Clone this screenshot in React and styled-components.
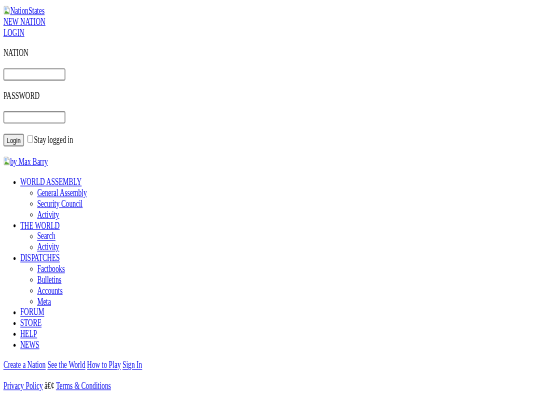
import React from "react";
import styled, { createGlobalStyle } from "styled-components";

const Global = createGlobalStyle`
  html, body { margin: 0; padding: 0; background: #fff; overflow: hidden; height: 405px; }
`;

const Page = styled.div`
  width: 1280px;
  height: 670px;
  overflow: hidden;
  padding: 9px 8px 0;
  box-sizing: border-box;
  transform: scale(0.421875, 0.603);
  transform-origin: 0 0;
  font-family: "Liberation Serif", "Times New Roman", serif;
  font-size: 16px;
  color: #000;
  filter: blur(0.9px);
`;

const Link = styled.a`
  color: #0000ee;
  text-decoration: underline;
`;

const BlockLink = styled(Link)`
  display: block;
`;

const Para = styled.p`
  margin: 16px 0;
`;

const TextField = styled.input`
  width: 147px;
  height: 21px;
  box-sizing: border-box;
  border: 2px solid #8f8f8f;
  border-radius: 3px;
  background: #fff;
  padding: 1px 2px;
`;

const LoginButton = styled.button`
  border: 2px solid #8f8f8f;
  border-radius: 3px;
  background: #efefef;
  font-family: "Liberation Sans", Arial, sans-serif;
  font-size: 13.33px;
  padding: 1px 6px;
`;

const Check = styled.input`
  margin: 3px 3px 3px 4px;
`;

const BrokenImage = styled.svg`
  width: 16px;
  height: 16px;
  vertical-align: -2px;
`;

const BrokenIcon = () => (
  <BrokenImage viewBox="0 0 16 16">
    <path d="M1.5 1.5h9l4 4v9h-13z" fill="#fff" stroke="#a8a8a8" />
    <path d="M10.5 1.5v4h4" fill="#e8e8e8" stroke="#a8a8a8" />
    <path d="M3 3h5v5H3z" fill="#9fc3f5" />
    <path d="M2 14l4-6 3 3 2-1 3 4z" fill="#5aa832" />
  </BrokenImage>
);

const OuterList = styled.ul`
  margin: 16px 0;
  padding-left: 40px;
  list-style: disc;
`;

const InnerList = styled.ul`
  margin: 0;
  padding-left: 40px;
  list-style: circle;
`;

const nav = [
  { t: "WORLD ASSEMBLY", c: ["General Assembly", "Security Council", "Activity"] },
  { t: "THE WORLD", c: ["Search", "Activity"] },
  { t: "DISPATCHES", c: ["Factbooks", "Bulletins", "Accounts", "Meta"] },
  { t: "FORUM" },
  { t: "STORE" },
  { t: "HELP" },
  { t: "NEWS" },
];

export default function App() {
  return (
    <Page>
      <Global />
      <BlockLink href="#"><BrokenIcon />NationStates</BlockLink>
      <BlockLink href="#">NEW NATION</BlockLink>
      <BlockLink href="#">LOGIN</BlockLink>
      <Para>NATION</Para>
      <Para><TextField type="text" /></Para>
      <Para>PASSWORD</Para>
      <Para><TextField type="password" /></Para>
      <Para>
        <LoginButton>Login</LoginButton> <Check type="checkbox" />Stay logged in
      </Para>
      <Para><Link href="#"><BrokenIcon />by Max Barry</Link></Para>
      <OuterList>
        {nav.map((n) => (
          <li key={n.t}>
            <Link href="#">{n.t}</Link>
            {n.c && (
              <InnerList>
                {n.c.map((c) => (
                  <li key={c}><Link href="#">{c}</Link></li>
                ))}
              </InnerList>
            )}
          </li>
        ))}
      </OuterList>
      <Para>
        <Link href="#">Create a Nation</Link> <Link href="#">See the World</Link>{" "}
        <Link href="#">How to Play</Link> <Link href="#">Sign In</Link>
      </Para>
      <Para>
        <Link href="#">Privacy Policy</Link> â€¢ <Link href="#">Terms &amp; Conditions</Link>
      </Para>
    </Page>
  );
}
